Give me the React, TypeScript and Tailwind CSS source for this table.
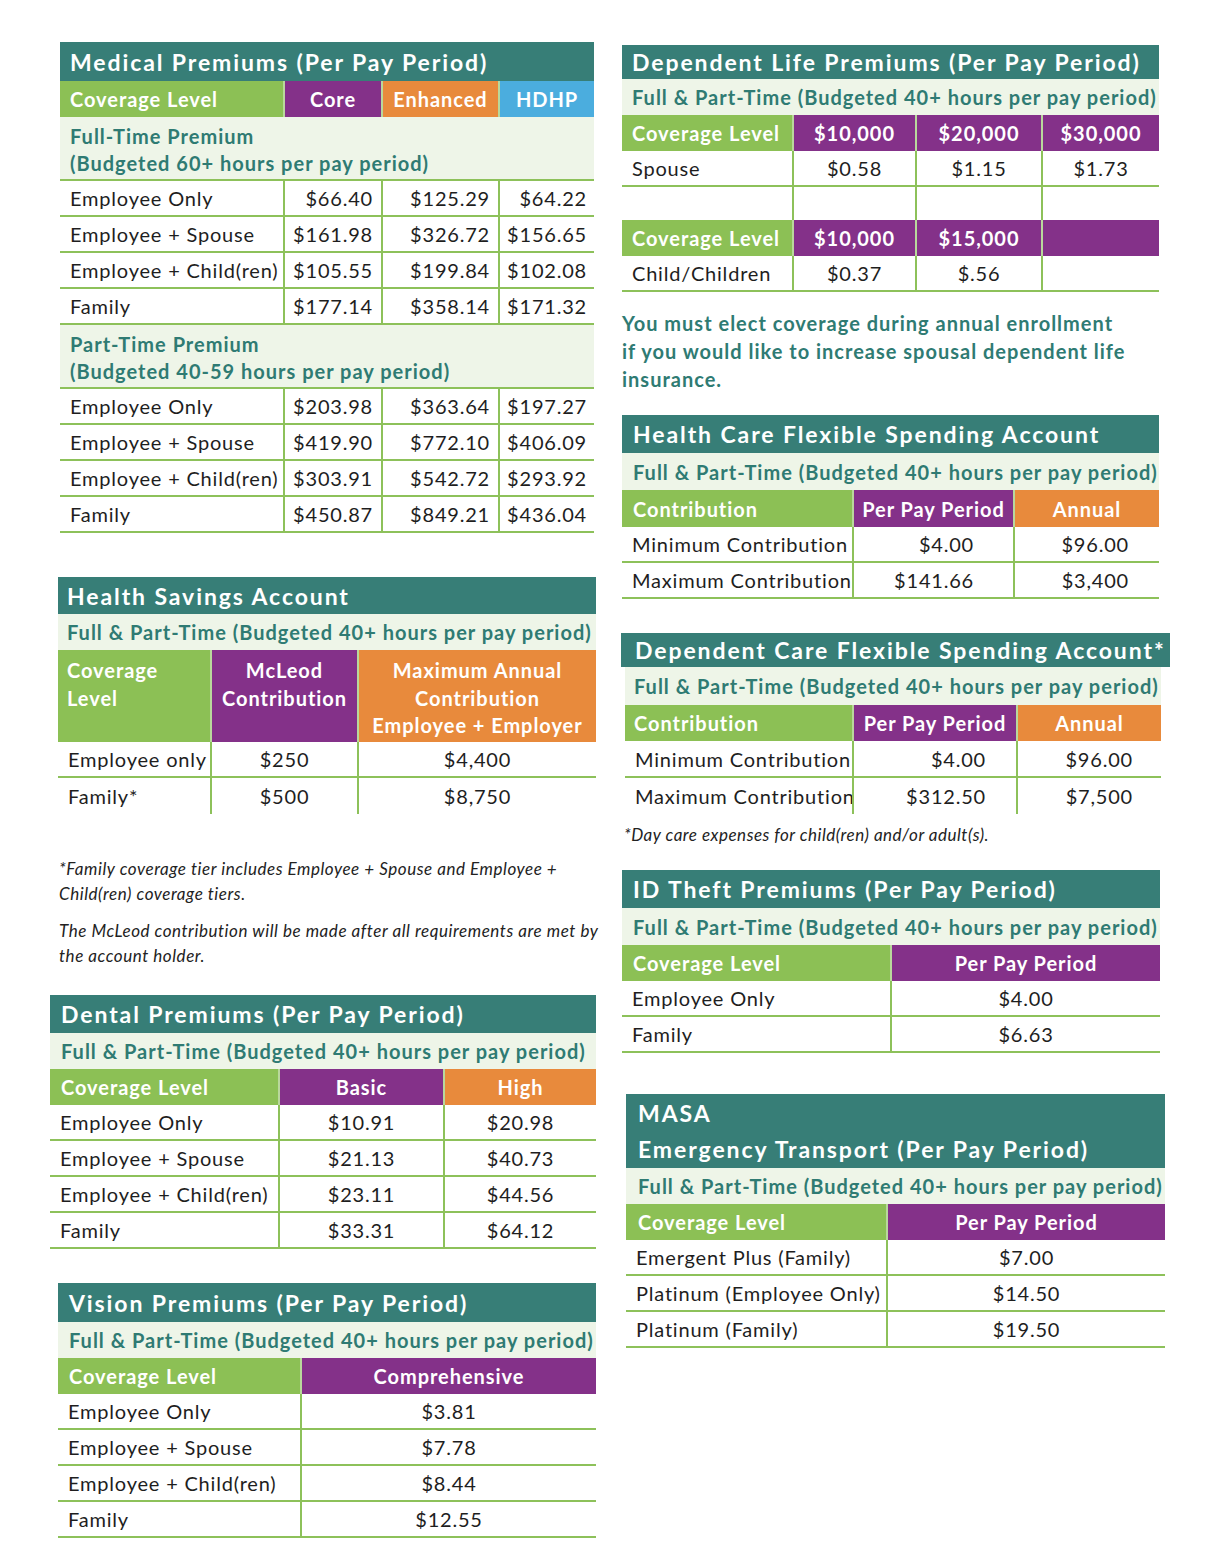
import React from 'react';

// palette
const GREEN = 'bg-[#8cc055]';
const PURPLE = 'bg-[#843189]';
const ORANGE = 'bg-[#e88a3c]';
const BLUE = 'bg-[#4badde]';

type Head = { label: React.ReactNode; bg: string; cls?: string };

const Title = ({ children, cls = '' }: { children: React.ReactNode; cls?: string }) => (
  <div className={`bg-[#377e77] text-white font-bold text-[23px] tracking-[1.9px] leading-[36px] flex whitespace-nowrap ${cls}`}>
    {children}
  </div>
);

const Sub = ({ children, cls = '' }: { children: React.ReactNode; cls?: string }) => (
  <div className={`bg-[#eef5e8] text-[#2f7b73] font-bold text-[20px] tracking-[1px] flex whitespace-nowrap ${cls}`}>{children}</div>
);

const HeadRow = ({ cols, heads, h = 'h-[36px]' }: { cols: string; heads: Head[]; h?: string }) => (
  <div className={`grid ${cols} ${h}`}>
    {heads.map((hd, i) => (
      <div
        key={i}
        className={`${hd.bg} ${i > 0 ? 'border-l-2 border-[#b9d89c]' : ''} flex text-white font-bold text-[20px] tracking-[0.95px] whitespace-nowrap ${
          hd.cls ?? 'items-center justify-center text-center'
        }`}
      >
        {hd.label}
      </div>
    ))}
  </div>
);

const DataRow = ({
  cols,
  cells,
  align,
  border = true,
  h = 'h-[36px]',
}: {
  cols: string;
  cells: string[];
  align: string[];
  border?: boolean;
  h?: string;
}) => (
  <div className={`grid ${cols} ${h} ${border ? 'border-b-2 border-[#8dc15a]' : ''}`}>
    {cells.map((c, i) => (
      <div
        key={i}
        className={`flex items-center text-[20px] tracking-[0.8px] text-[#1e1e1e] whitespace-nowrap ${
          i > 0 ? 'border-l-2 border-[#8dc15a]' : 'pl-[10px]'
        } ${align[i] ?? ''}`}
      >
        {c}
      </div>
    ))}
  </div>
);

const Rows = ({ cols, rows, align, lastBorder = true }: { cols: string; rows: string[][]; align: string[]; lastBorder?: boolean }) => (
  <>
    {rows.map((r, i) => (
      <DataRow key={i} cols={cols} cells={r} align={align} border={i < rows.length - 1 || lastBorder} />
    ))}
  </>
);

const SUBLINE = 'Full & Part-Time (Budgeted 40+ hours per pay period)';

const MED = 'grid-cols-[223px_98px_117px_96px]';
const medAlign = ['', 'justify-end pr-[8px]', 'justify-end pr-[8px]', 'justify-end pr-[7px]'];

const fullTime = [
  ['Employee Only', '$66.40', '$125.29', '$64.22'],
  ['Employee + Spouse', '$161.98', '$326.72', '$156.65'],
  ['Employee + Child(ren)', '$105.55', '$199.84', '$102.08'],
  ['Family', '$177.14', '$358.14', '$171.32'],
];

const partTime = [
  ['Employee Only', '$203.98', '$363.64', '$197.27'],
  ['Employee + Spouse', '$419.90', '$772.10', '$406.09'],
  ['Employee + Child(ren)', '$303.91', '$542.72', '$293.92'],
  ['Family', '$450.87', '$849.21', '$436.04'],
];

const tiers = ['Employee Only', 'Employee + Spouse', 'Employee + Child(ren)', 'Family'];

export default function App() {
  return (
    <div className="w-[1224px] h-[1562px] bg-white overflow-hidden flex pl-[50px] font-['Lato',sans-serif]">
      {/* Left column */}
      <div className="w-[546px] flex flex-col">
        {/* Medical */}
        <div className="ml-[10px] w-[534px] mt-[42px]">
          <Title cls="h-[39px] items-center pl-[10px]">Medical Premiums (Per Pay Period)</Title>
          <HeadRow
            cols={MED}
            heads={[
              { label: 'Coverage Level', bg: GREEN, cls: 'items-center pl-[10px]' },
              { label: 'Core', bg: PURPLE },
              { label: 'Enhanced', bg: ORANGE },
              { label: 'HDHP', bg: BLUE },
            ]}
          />
          <Sub cls="h-[64px] flex-col justify-center pt-[4px] pl-[10px] leading-[27px] border-b-2 border-[#8dc15a]">
            <span>Full-Time Premium</span>
            <span>(Budgeted 60+ hours per pay period)</span>
          </Sub>
          <Rows cols={MED} rows={fullTime} align={medAlign} />
          <Sub cls="h-[64px] flex-col justify-center pt-[4px] pl-[10px] leading-[27px] border-b-2 border-[#8dc15a]">
            <span>Part-Time Premium</span>
            <span>(Budgeted 40-59 hours per pay period)</span>
          </Sub>
          <Rows cols={MED} rows={partTime} align={medAlign} />
        </div>

        {/* HSA */}
        <div className="ml-[8px] w-[538px] mt-[44px]">
          <Title cls="h-[37px] items-center pl-[9px]">Health Savings Account</Title>
          <Sub cls="h-[36px] items-center pl-[9px]">{SUBLINE}</Sub>
          <HeadRow
            cols="grid-cols-[152px_147px_239px]"
            h="h-[92px] leading-[27.5px]"
            heads={[
              { label: <span>Coverage<br />Level</span>, bg: GREEN, cls: 'items-start pt-[7px] pl-[9px]' },
              { label: <span>McLeod<br />Contribution</span>, bg: PURPLE, cls: 'items-start justify-center text-center pt-[7px]' },
              {
                label: <span>Maximum Annual<br />Contribution<br />Employee + Employer</span>,
                bg: ORANGE,
                cls: 'items-start justify-center text-center pt-[7px]',
              },
            ]}
          />
          <Rows
            cols="grid-cols-[152px_147px_239px]"
            rows={[
              ['Employee only', '$250', '$4,400'],
              ['Family*', '$500', '$8,750'],
            ]}
            align={['', 'justify-center', 'justify-center']}
            lastBorder={false}
          />
        </div>

        <div className="ml-[9px] mt-[42px] italic text-[17px] leading-[25px] text-[#222] tracking-[0.55px] flex flex-col gap-[12px] whitespace-nowrap">
          <p>
            *Family coverage tier includes Employee + Spouse and Employee +<br />Child(ren) coverage tiers.
          </p>
          <p>
            The McLeod contribution will be made after all requirements are met by<br />the account holder.
          </p>
        </div>

        {/* Dental */}
        <div className="w-[546px] mt-[27px]">
          <Title cls="h-[38px] items-center pl-[11px]">Dental Premiums (Per Pay Period)</Title>
          <Sub cls="h-[36px] items-center pl-[11px]">{SUBLINE}</Sub>
          <HeadRow
            cols="grid-cols-[228px_165px_153px]"
            heads={[
              { label: 'Coverage Level', bg: GREEN, cls: 'items-center pl-[11px]' },
              { label: 'Basic', bg: PURPLE },
              { label: 'High', bg: ORANGE },
            ]}
          />
          <Rows
            cols="grid-cols-[228px_165px_153px]"
            rows={[
              [tiers[0], '$10.91', '$20.98'],
              [tiers[1], '$21.13', '$40.73'],
              [tiers[2], '$23.11', '$44.56'],
              [tiers[3], '$33.31', '$64.12'],
            ]}
            align={['', 'justify-center', 'justify-center']}
          />
        </div>

        {/* Vision */}
        <div className="ml-[8px] w-[538px] mt-[34px]">
          <Title cls="h-[39px] items-center pl-[11px]">Vision Premiums (Per Pay Period)</Title>
          <Sub cls="h-[36px] items-center pl-[11px]">{SUBLINE}</Sub>
          <HeadRow
            cols="grid-cols-[242px_296px]"
            heads={[
              { label: 'Coverage Level', bg: GREEN, cls: 'items-center pl-[11px]' },
              { label: 'Comprehensive', bg: PURPLE },
            ]}
          />
          <Rows
            cols="grid-cols-[242px_296px]"
            rows={[
              [tiers[0], '$3.81'],
              [tiers[1], '$7.78'],
              [tiers[2], '$8.44'],
              [tiers[3], '$12.55'],
            ]}
            align={['', 'justify-center']}
          />
        </div>
      </div>

      {/* Right column */}
      <div className="ml-[25px] w-[552px] flex flex-col">
        {/* Dependent Life */}
        <div className="ml-[1px] w-[537px] mt-[45px]">
          <Title cls="h-[34px] items-center pl-[10px]">Dependent Life Premiums (Per Pay Period)</Title>
          <Sub cls="h-[36px] items-center pl-[10px]">{SUBLINE}</Sub>
          <HeadRow
            cols="grid-cols-[170px_123px_126px_118px]"
            heads={[
              { label: 'Coverage Level', bg: GREEN, cls: 'items-center pl-[10px]' },
              { label: '$10,000', bg: PURPLE },
              { label: '$20,000', bg: PURPLE },
              { label: '$30,000', bg: PURPLE },
            ]}
          />
          <DataRow
            cols="grid-cols-[170px_123px_126px_118px]"
            cells={['Spouse', '$0.58', '$1.15', '$1.73']}
            align={['', 'justify-center', 'justify-center', 'justify-center']}
          />
          <DataRow
            cols="grid-cols-[170px_123px_126px_118px]"
            cells={['', '', '', '']}
            align={[]}
            border={false}
            h="h-[33px]"
          />
          <HeadRow
            cols="grid-cols-[170px_123px_126px_118px]"
            heads={[
              { label: 'Coverage Level', bg: GREEN, cls: 'items-center pl-[10px]' },
              { label: '$10,000', bg: PURPLE },
              { label: '$15,000', bg: PURPLE },
              { label: '', bg: PURPLE },
            ]}
          />
          <DataRow
            cols="grid-cols-[170px_123px_126px_118px]"
            cells={['Child/Children', '$0.37', '$.56', '']}
            align={['', 'justify-center', 'justify-center', 'justify-center']}
          />
        </div>

        <p className="ml-[1px] mt-[17px] font-bold text-[20px] tracking-[1px] leading-[28px] text-[#2f7b73] whitespace-nowrap">
          You must elect coverage during annual enrollment
          <br />
          if you would like to increase spousal dependent life
          <br />
          insurance.
        </p>

        {/* Health Care FSA */}
        <div className="ml-[1px] w-[537px] mt-[22px]">
          <Title cls="h-[38px] items-center pl-[11px]">Health Care Flexible Spending Account</Title>
          <Sub cls="h-[37px] items-center pl-[11px]">{SUBLINE}</Sub>
          <HeadRow
            cols="grid-cols-[230px_161px_146px]"
            h="h-[37px]"
            heads={[
              { label: 'Contribution', bg: GREEN, cls: 'items-center pl-[11px]' },
              { label: 'Per Pay Period', bg: PURPLE },
              { label: 'Annual', bg: ORANGE },
            ]}
          />
          <Rows
            cols="grid-cols-[230px_161px_146px]"
            rows={[
              ['Minimum Contribution', '$4.00', '$96.00'],
              ['Maximum Contribution', '$141.66', '$3,400'],
            ]}
            align={['', 'justify-end pr-[39px]', 'justify-end pr-[30px]']}
          />
        </div>

        {/* Dependent Care FSA */}
        <div className="mt-[34px]">
          <Title cls="w-[549px] h-[34px] items-center pl-[14px]">Dependent Care Flexible Spending Account*</Title>
          <div className="ml-[4px] w-[536px]">
            <Sub cls="h-[38px] items-center pl-[9px]">{SUBLINE}</Sub>
            <HeadRow
              cols="grid-cols-[227px_164px_145px]"
              heads={[
                { label: 'Contribution', bg: GREEN, cls: 'items-center pl-[9px]' },
                { label: 'Per Pay Period', bg: PURPLE },
                { label: 'Annual', bg: ORANGE },
              ]}
            />
            <DataRow
              cols="grid-cols-[227px_164px_145px]"
              cells={['Minimum Contribution', '$4.00', '$96.00']}
              align={['', 'justify-end pr-[30px]', 'justify-end pr-[28px]']}
              h="h-[37px]"
            />
            <DataRow
              cols="grid-cols-[227px_164px_145px]"
              cells={['Maximum Contribution', '$312.50', '$7,500']}
              align={['', 'justify-end pr-[30px]', 'justify-end pr-[28px]']}
              border={false}
            />
          </div>
        </div>

        <p className="ml-[3px] mt-[9px] italic text-[17px] leading-[24px] text-[#222] tracking-[0.5px] whitespace-nowrap">
          *Day care expenses for child(ren) and/or adult(s).
        </p>

        {/* ID Theft */}
        <div className="ml-[1px] w-[538px] mt-[23px]">
          <Title cls="h-[38px] items-center pl-[11px]">ID Theft Premiums (Per Pay Period)</Title>
          <Sub cls="h-[37px] items-center pl-[11px]">{SUBLINE}</Sub>
          <HeadRow
            cols="grid-cols-[268px_270px]"
            heads={[
              { label: 'Coverage Level', bg: GREEN, cls: 'items-center pl-[11px]' },
              { label: 'Per Pay Period', bg: PURPLE },
            ]}
          />
          <Rows
            cols="grid-cols-[268px_270px]"
            rows={[
              ['Employee Only', '$4.00'],
              ['Family', '$6.63'],
            ]}
            align={['', 'justify-center']}
          />
        </div>

        {/* MASA */}
        <div className="ml-[5px] w-[539px] mt-[41px]">
          <Title cls="h-[74px] flex-col justify-center pl-[12px]">
            <span>MASA</span>
            <span>Emergency Transport (Per Pay Period)</span>
          </Title>
          <Sub cls="h-[36px] items-center pl-[12px]">{SUBLINE}</Sub>
          <HeadRow
            cols="grid-cols-[260px_279px]"
            heads={[
              { label: 'Coverage Level', bg: GREEN, cls: 'items-center pl-[12px]' },
              { label: 'Per Pay Period', bg: PURPLE },
            ]}
          />
          <Rows
            cols="grid-cols-[260px_279px]"
            rows={[
              ['Emergent Plus (Family)', '$7.00'],
              ['Platinum (Employee Only)', '$14.50'],
              ['Platinum (Family)', '$19.50'],
            ]}
            align={['', 'justify-center']}
          />
        </div>
      </div>
    </div>
  );
}
